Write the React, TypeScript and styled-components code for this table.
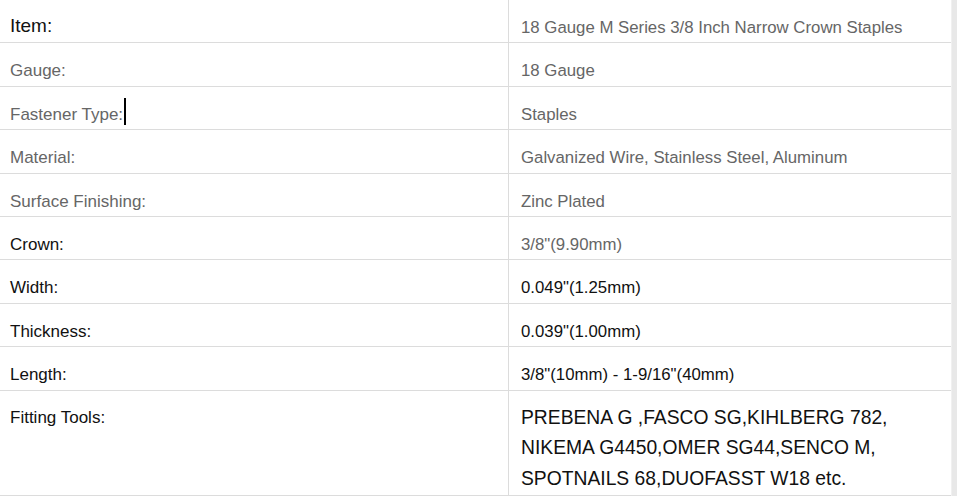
import React from 'react';
import styled, { createGlobalStyle } from 'styled-components';

const GlobalStyle = createGlobalStyle`
  html, body {
    margin: 0;
    padding: 0;
    background: #fff;
    font-family: "Liberation Sans", Arial, sans-serif;
  }
`;

const Page = styled.div`
  display: flex;
  width: 957px;
  height: 496px;
  overflow: hidden;
`;

const Table = styled.div`
  width: 951px;
  display: flex;
  flex-direction: column;
  border-right: 1px solid #f0f0f0;
`;

const ScrollTrack = styled.div`
  flex: 1;
  background: #e8e8e8;
`;

const Row = styled.div<{ tall?: boolean }>`
  display: grid;
  grid-template-columns: 509px 1fr;
  border-bottom: 1px solid #dcdcdc;
  height: ${p => (p.tall ? '105px' : '43.4px')};
  box-sizing: border-box;
  flex-shrink: 0;
`;

const Label = styled.div<{ dark?: boolean; big?: boolean; top?: number }>`
  padding: ${p => p.top ?? 16}px 10px 0;
  box-sizing: border-box;
  border-right: 1px solid #dcdcdc;
  font-size: ${p => (p.big ? '19px' : '17px')};
  line-height: 24px;
  color: ${p => (p.dark ? '#111' : '#666')};
  white-space: nowrap;
`;

const Value = styled.div<{ dark?: boolean; big?: boolean; top?: number }>`
  padding: ${p => p.top ?? 16}px 12px 0;
  font-size: ${p => (p.big ? '19.3px' : '16.8px')};
  line-height: ${p => (p.big ? '30.5px' : '24px')};
  color: ${p => (p.dark ? '#111' : '#666')};
  white-space: nowrap;
`;

/* text cursor left in the cell; drawn over the line so it doesn't grow it */
const Caret = styled.span`
  position: relative;
  display: inline-block;
  width: 2px;
  height: 0;
  margin-left: 1px;
  &::after {
    content: '';
    position: absolute;
    left: 0;
    bottom: -5px;
    width: 2px;
    height: 27px;
    background: #000;
  }
`;

type Spec = { label: React.ReactNode; value: React.ReactNode; labelDark?: boolean; valueDark?: boolean };

const rows: Spec[] = [
  { label: 'Gauge:', value: '18 Gauge' },
  { label: <>Fastener Type:<Caret /></>, value: 'Staples' },
  { label: 'Material:', value: 'Galvanized Wire, Stainless Steel, Aluminum' },
  { label: 'Surface Finishing:', value: 'Zinc Plated' },
  { label: 'Crown:', value: '3/8"(9.90mm)', labelDark: true },
  { label: 'Width:', value: '0.049"(1.25mm)', labelDark: true, valueDark: true },
  { label: 'Thickness:', value: '0.039"(1.00mm)', labelDark: true, valueDark: true },
  { label: 'Length:', value: '3/8"(10mm) - 1-9/16"(40mm)', labelDark: true, valueDark: true },
];

export default function App() {
  return (
    <Page>
      <GlobalStyle />
      <Table>
        <Row>
          <Label big dark top={14}>Item:</Label>
          <Value top={16}>18 Gauge M Series 3/8 Inch Narrow Crown Staples</Value>
        </Row>
        {rows.map((r, i) => (
          <Row key={i}>
            <Label dark={r.labelDark}>{r.label}</Label>
            <Value dark={r.valueDark}>{r.value}</Value>
          </Row>
        ))}
        <Row tall>
          <Label dark top={15}>Fitting Tools:</Label>
          <Value big dark top={12}>
            PREBENA G ,FASCO SG,KIHLBERG 782,
            <br />
            NIKEMA G4450,OMER SG44,SENCO M,
            <br />
            SPOTNAILS 68,DUOFASST W18 etc.
          </Value>
        </Row>
      </Table>
      <ScrollTrack />
    </Page>
  );
}
